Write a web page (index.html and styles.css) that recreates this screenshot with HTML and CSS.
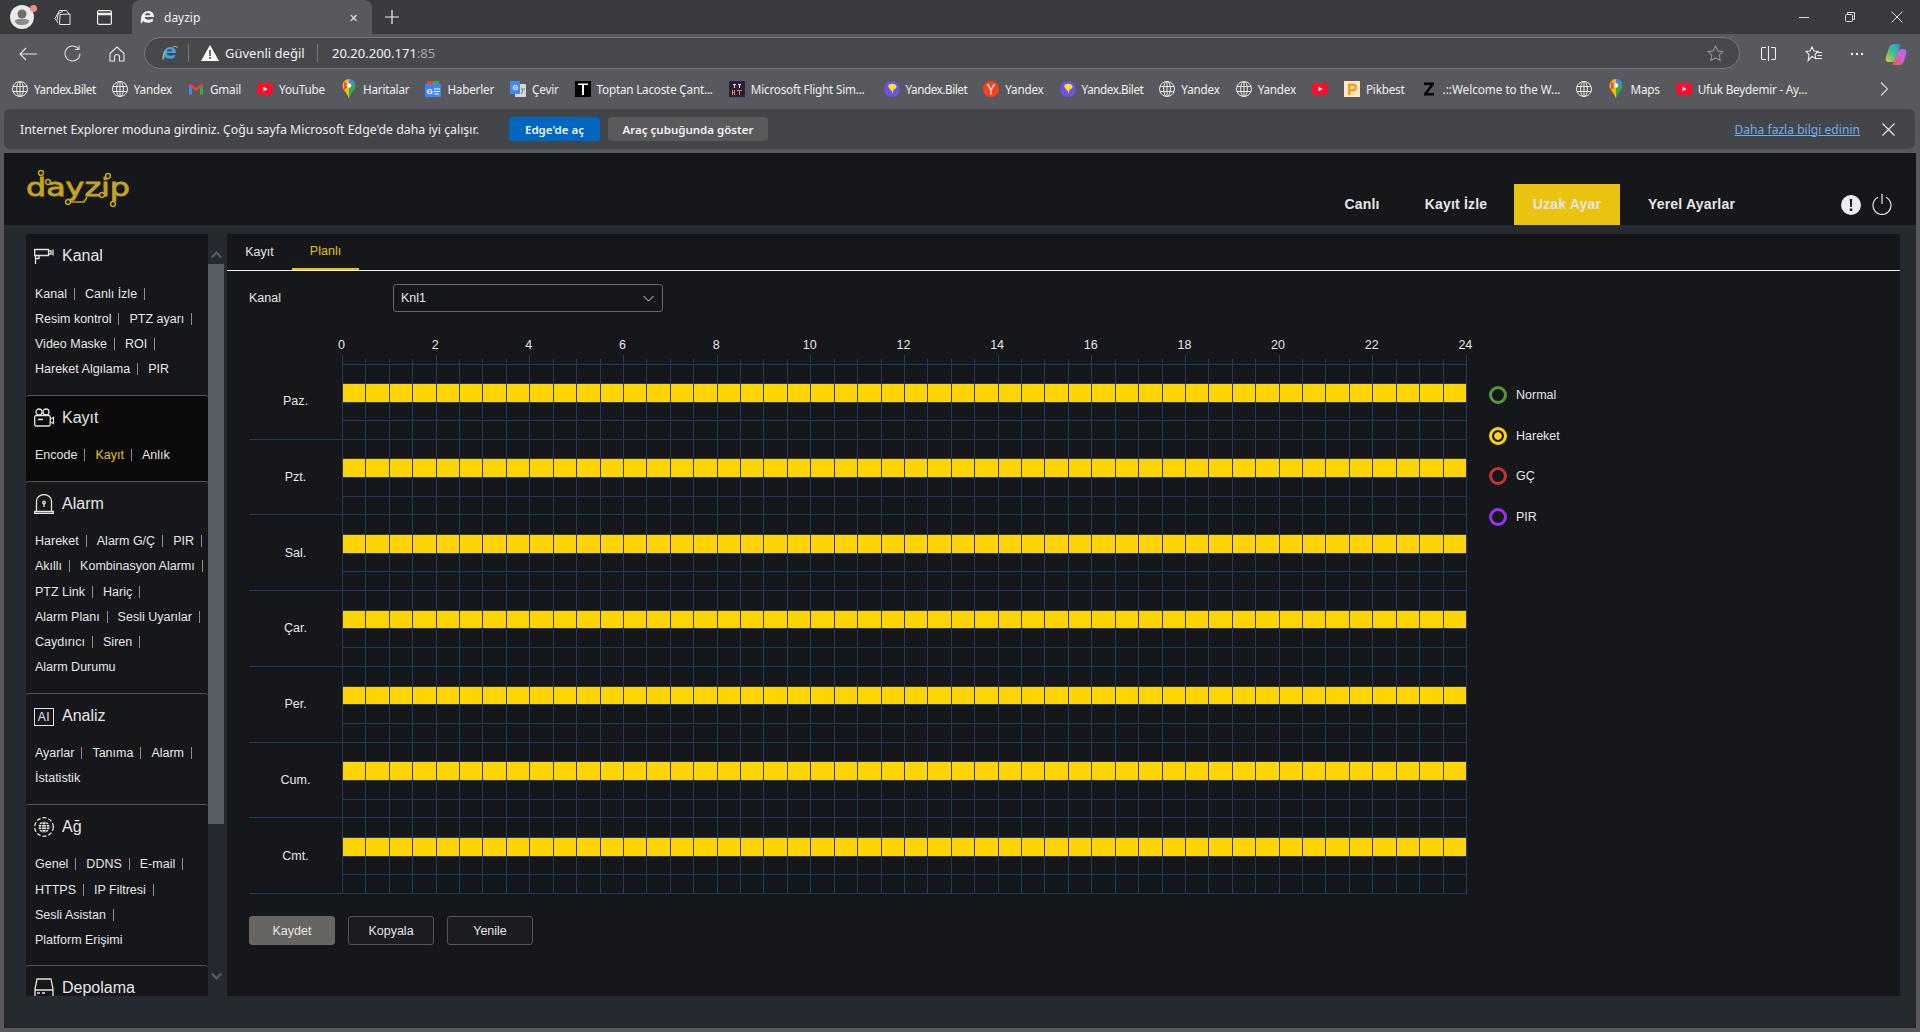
FILE: index.html
```html
<!DOCTYPE html>
<html lang="tr">
  <head>
    <meta charset="UTF-8" />
    <title>dayzip</title>
    <link rel="stylesheet" href="styles.css">
  </head>
  <body>
    <svg class="defs" width="0" height="0">
      <symbol id="globe" viewBox="0 0 16 16"><g fill="none" stroke="#e8e8e8" stroke-width="1"><circle cx="8" cy="8" r="7.5"/><ellipse cx="8" cy="8" rx="3.4" ry="7.5"/><path d="M8 .5v15M1 5.5h14M1 10.5h14"/></g></symbol>
      <symbol id="yt" viewBox="0 0 16 16"><rect x="0" y="2" width="16" height="12" rx="3" fill="#f70f2c"/><path d="M6.5 5.8v4.4L10.5 8z" fill="#fff"/></symbol>
      <symbol id="bilet" viewBox="0 0 16 16"><circle cx="8" cy="8" r="8" fill="#6a55e0"/><path d="M5 3.5c2-1.5 7-1 7.500 1.500s-2 3-3 4l-1 3.500L7 9C5 8 3.500 5 5 3.500z" fill="#ffdc2e"/></symbol>
      <symbol id="mappin" viewBox="0 0 16 20"><path d="M8 0a6.500 6.500 0 0 1 6.500 6.500c0 4-3.500 6-6.500 13z" fill="#34a853"/><path d="M8 0a6.500 6.500 0 0 0-6.500 6.500c0 4 3.500 6 6.500 13z" fill="#fbbc04"/><path d="M3 2.500 8 6.500 3 11z" fill="#ea4335" opacity=".9"/><path d="M8 0a6.500 6.500 0 0 1 6 4L8 6.500z" fill="#4285f4"/><circle cx="8" cy="6.500" r="2.300" fill="#fff"/></symbol>
      <symbol id="gear-e" viewBox="0 0 16 16"><path d="M1 10.500C1 5 4.500 2 8.500 2c3.500 0 5.500 2.500 5.500 6H4.800c.2 3 4.500 3.500 8 1.500v3C9 14.500 4 14 3.200 11.500 2.700 13 2.200 14 1 14.500 .6 13 .7 12 1 10.500zM4.900 6.200h5.400C10.200 3.400 5.400 3.400 4.900 6.200z" fill="#f2f2f2"/></symbol>
    </svg>

    <div class="tabbar">
      <div class="avatar">
        <svg width="24" height="24" viewBox="0 0 24 24"><circle cx="12" cy="12" r="12" fill="#e9e9e9"/><circle cx="12" cy="9" r="4.500" fill="#6e6e6e"/><path d="M5 16c0-3 14-3 14 0 0 2.500-3 4-7 4s-7-1.500-7-4z" fill="#8a8a8a"/></svg>
        <span class="avatar-dot"></span>
      </div>
      <svg class="tb-workspaces" width="17" height="17" viewBox="0 0 17 17" fill="none" stroke="#e6e6e6"><path d="M5.500 15.500 6 5.500l10-.5v10.500zM4 14 1 9.500 5.500 1.500h7L15 5M3 11.500 4 5l5-3"/></svg>
      <svg class="tb-vtabs" width="15" height="15" viewBox="0 0 15 15" fill="none" stroke="#eee" stroke-width="1.200"><rect x=".6" y=".6" width="13.800" height="13.800" rx="1.500"/><path d="M.6 4h13.800" stroke-width="2.500"/></svg>
      <div class="tab">
        <svg width="16" height="16"><use href="#gear-e"/></svg>
        <span class="tab-title">dayzip</span>
        <span class="tab-close">✕</span>
      </div>
      <svg class="tb-new" width="14" height="14" viewBox="0 0 14 14" stroke="#eee" stroke-width="1.200"><path d="M7 0v14M0 7h14"/></svg>
      <div class="win-controls">
        <svg width="10" height="10" viewBox="0 0 10 10" stroke="#ddd"><path d="M0 5.500h10"/></svg>
        <svg width="10" height="10" viewBox="0 0 10 10" fill="none" stroke="#ddd"><rect x=".5" y="2.500" width="7" height="7" rx="1"/><path d="M2.500 2.500V.5h7v7h-2"/></svg>
        <svg width="12" height="12" viewBox="0 0 12 12" stroke="#ddd"><path d="M.5.500l11 11M11.500.500l-11 11"/></svg>
      </div>
    </div>

    <div class="toolbar">
      <svg class="nav-back" width="18" height="14" viewBox="0 0 18 14" fill="none" stroke="#e8e8e8" stroke-width="1.100"><path d="M18 7H1M7 1 1 7l6 6"/></svg>
      <svg class="nav-reload" width="17" height="17" viewBox="0 0 17 17" fill="none" stroke="#d8d8d8" stroke-width="1.100"><path d="M14.500 4A7.500 7.500 0 1 0 16 8.500M15 .5V4.500H11"/></svg>
      <svg class="nav-home" width="16" height="16" viewBox="0 0 16 16" fill="none" stroke="#e8e8e8" stroke-width="1.100"><path d="M1 7.500 8 1l7 6.500V15h-4.500v-4a2.500 2.500 0 0 0-5 0v4H1z"/></svg>
      <div class="addressbar">
        <svg class="ie-icon" width="16" height="16" viewBox="0 0 16 16"><path d="M1 10.500C1 5 4.500 2 8.500 2c3.500 0 5.500 2.500 5.500 6H4.800c.2 3 4.500 3.500 8 1.500v3C9 14.500 4 14 3.200 11.500 2.700 13 2.200 14 1 14.500 .6 13 .7 12 1 10.500zM4.900 6.200h5.400C10.200 3.400 5.400 3.400 4.900 6.200z" fill="#3ba5e8"/><path d="M1 14.500C.4 12 2 8 3.500 6" fill="none" stroke="#eeb422"/><path d="M11 2c2-1 4-1 4 1" fill="none" stroke="#eeb422"/></svg>
        <span class="addr-sep"></span>
        <svg class="warn-icon" width="18" height="16" viewBox="0 0 18 16"><path d="M9 0 18 16H0z" fill="#fff"/><path d="M8.200 5h1.600v6H8.200zM8.200 12h1.600v2H8.200z" fill="#47484c"/></svg>
        <span class="addr-warn">Güvenli değil</span>
        <span class="addr-sep addr-sep-2"></span>
        <span class="addr-url">20.20.200.171<i>:85</i></span>
        <svg class="addr-star" width="17" height="17" viewBox="0 0 17 17" fill="none" stroke="#8e8f92" stroke-width="1.100"><path d="M8.500 1l2.300 4.900 5.200.7-3.800 3.600 1 5.300-4.700-2.600-4.700 2.600 1-5.300L1 6.600l5.200-.7z"/></svg>
      </div>
      <svg class="tool-split" width="15" height="15" viewBox="0 0 15 15" fill="none" stroke="#eee" stroke-width="1.100"><path d="M7.500 0v15M5 1.500H1.500a1 1 0 0 0-1 1v10a1 1 0 0 0 1 1H5M10 1.500h3.500a1 1 0 0 1 1 1v10a1 1 0 0 1-1 1H10"/></svg>
      <svg class="tool-fav" width="18" height="16" viewBox="0 0 18 16" fill="none" stroke="#eee" stroke-width="1.100"><path d="M7 1l1.900 4 4.100.5-3 2.900.8 4.300L7 10.500 3.200 14.500 4 8.400 1 5.500 5.100 5zM12 6.500h5M12.500 9.500h4.500M11.500 12.500h5.500"/></svg>
      <svg class="tool-more" width="14" height="4" viewBox="0 0 14 4" fill="#eee"><circle cx="2" cy="2" r="1.200"/><circle cx="7" cy="2" r="1.200"/><circle cx="12" cy="2" r="1.200"/></svg>
      <svg class="tool-copilot" width="22" height="22" viewBox="0 0 22 22">
        <defs>
          <linearGradient id="cpa" x1="0" y1="1" x2="1" y2="0"><stop offset="0" stop-color="#f0c428"/><stop offset=".5" stop-color="#3cc48c"/><stop offset="1" stop-color="#2a8cf0"/></linearGradient>
          <linearGradient id="cpb" x1="0" y1="1" x2="1" y2="0"><stop offset="0" stop-color="#f05a4a"/><stop offset=".6" stop-color="#d460d8"/><stop offset="1" stop-color="#9a70f0"/></linearGradient>
        </defs>
        <path d="M9 1h5c1 0 1.500 1 1 2L10 17c-.5 1.500-1.500 2-3 2H4c-3 0-4-2-3-5l3-9C5 2 6.500 1 9 1z" fill="url(#cpa)"/>
        <path d="M18 6c3 0 4 2 3 5l-2 7c-1 3-2.500 4-5 4H9c-1.500 0-1.500-1-1-2l5-11c.5-2 2-3 5-3z" fill="url(#cpb)"/>
      </svg>
    </div>

    <div class="bookmarks">
      <a class="bm bm-tight"><svg width="16" height="16"><use href="#globe"/></svg>Yandex.Bilet</a>
      <a class="bm"><svg width="16" height="16"><use href="#globe"/></svg>Yandex</a>
      <a class="bm"><svg width="16" height="16" viewBox="0 0 16 16"><path d="M1 3v10.500h3V7l4 3 4-3v6.500h3V3l-1.500-.5L8 7 2.500 2.500z" fill="#ea4335"/><path d="M1 4v9.500h3V7z" fill="#4285f4"/><path d="M12 7v6.500h3V4z" fill="#34a853"/></svg>Gmail</a>
      <a class="bm"><svg width="16" height="16"><use href="#yt"/></svg>YouTube</a>
      <a class="bm"><svg width="16" height="20"><use href="#mappin"/></svg>Haritalar</a>
      <a class="bm"><svg width="16" height="16" viewBox="0 0 16 16"><path d="M2 0h12v5H2z" fill="#34a853"/><path d="M2 0h6v4H2z" fill="#ea4335"/><rect y="3" width="16" height="13" rx="1" fill="#4285f4"/><text x="1.500" y="13" font-size="8" font-weight="bold" fill="#fff" font-family="Liberation Sans">G</text><path d="M9 8h6M9 10.500h6M9 13h5" stroke="#fff"/></svg>Haberler</a>
      <a class="bm"><svg width="16" height="16" viewBox="0 0 16 16"><rect x="5" y="3" width="11" height="13" rx="1" fill="#d8d8d8"/><rect width="10" height="13" rx="1" fill="#4285f4"/><text x="2.500" y="9" font-size="7" font-weight="bold" fill="#fff" font-family="Liberation Sans">G</text><path d="M11 8h4M13 8l-1.500 5" stroke="#777"/></svg>Çevir</a>
      <a class="bm"><svg width="16" height="16" viewBox="0 0 16 16"><rect width="16" height="16"/><path d="M3 2.500h10v1.500H9v10H7V4H3z" fill="#fff"/></svg>Toptan Lacoste Çant...</a>
      <a class="bm"><svg width="16" height="16" viewBox="0 0 16 16"><rect width="16" height="16" fill="#2c1c3e"/><path d="M4 3h3v1H6v3H5V4H4zM9 3h3v1h-1v3h-1V4H9z" fill="#e8e8e8"/><path d="M3 9h1v2h1V9h1v5H5v-2H4v2H3zM8 9h5v1h-2v4h-1v-4H8z" fill="#f08040"/></svg>Microsoft Flight Sim...</a>
      <a class="bm bm-tight bm-gap"><svg width="16" height="16"><use href="#bilet"/></svg>Yandex.Bilet</a>
      <a class="bm"><svg width="16" height="16" viewBox="0 0 16 16"><circle cx="8" cy="8" r="8" fill="#fc3f1d"/><path d="M4.500 3 8 9v4.500M11.500 3 8 9" fill="none" stroke="#fff" stroke-width="1.300"/></svg>Yandex</a>
      <a class="bm bm-tight"><svg width="16" height="16"><use href="#bilet"/></svg>Yandex.Bilet</a>
      <a class="bm"><svg width="16" height="16"><use href="#globe"/></svg>Yandex</a>
      <a class="bm"><svg width="16" height="16"><use href="#globe"/></svg>Yandex</a>
      <a class="bm"><svg width="16" height="16"><use href="#yt"/></svg></a>
      <a class="bm"><svg width="16" height="16" viewBox="0 0 16 16"><rect width="16" height="16" fill="#fde9c4"/><path d="M4 2.500h5a4 4 0 0 1 0 8H6.500v3.500H4zM6.500 5v3H9a1.500 1.500 0 0 0 0-3z" fill="#f79a1e"/></svg>Pikbest</a>
      <a class="bm bm-loose"><svg width="16" height="16" viewBox="0 0 16 16"><path d="M3 1.500h10v2L6.500 12H13v2.500H3v-2L9.500 4H3z" fill="#000"/></svg>.::Welcome to the W...</a>
      <a class="bm"><svg width="16" height="16"><use href="#globe"/></svg></a>
      <a class="bm"><svg width="16" height="20"><use href="#mappin"/></svg>Maps</a>
      <a class="bm"><svg width="16" height="16"><use href="#yt"/></svg>Ufuk Beydemir - Ay...</a>
      <svg class="bm-more" width="8" height="14" viewBox="0 0 8 14" fill="none" stroke="#ddd" stroke-width="1.100"><path d="M1 .5 7.500 7 1 13.500"/></svg>
    </div>

    <div class="infobar">
      <span class="info-text">Internet Explorer moduna girdiniz. Çoğu sayfa Microsoft Edge'de daha iyi çalışır.</span>
      <button class="info-btn info-btn-blue">Edge'de aç</button>
      <button class="info-btn">Araç çubuğunda göster</button>
      <a class="info-link">Daha fazla bilgi edinin</a>
      <svg class="info-close" width="13" height="13" viewBox="0 0 13 13" stroke="#eee" stroke-width="1.100"><path d="M.5.500l12 12M12.500.500l-12 12"/></svg>
    </div>

    <div class="page">
      <header class="header">
        <svg class="logo" width="110" height="42" viewBox="0 0 110 42" fill="none">
          <text x="2" y="28" class="logo-text" textLength="104" lengthAdjust="spacingAndGlyphs">dayzip</text>
          <g stroke="#c4a51e" stroke-width="1.500">
            <circle cx="17" cy="5" r="2.400" fill="#15171b"/>
            <circle cx="24" cy="14" r="2.400" fill="#15171b"/>
            <path d="M46.500 34H60l3-5"/>
            <circle cx="44" cy="34" r="2.400" fill="#15171b"/>
            <circle cx="84" cy="8" r="2.400" fill="#15171b"/>
            <circle cx="78" cy="27" r="2.400" fill="#15171b"/>
            <circle cx="89" cy="36" r="2.400" fill="#15171b"/>
          </g>
        </svg>
        <nav class="main-nav">
          <a>Canlı</a>
          <a>Kayıt İzle</a>
          <a class="active">Uzak Ayar</a>
          <a>Yerel Ayarlar</a>
        </nav>
        <div class="header-icons">
          <svg width="20" height="20" viewBox="0 0 20 20"><circle cx="10" cy="10" r="10" fill="#eceef2"/><path d="M8.800 4h2.400l-.4 8H9.200zM8.800 13.500h2.400V16H8.800z" fill="#15171b"/></svg>
          <svg width="20" height="21" viewBox="0 0 20 21" fill="none" stroke="#e4e4e4" stroke-width="1.200"><path d="M10 0v10M6 3.300a9 9 0 1 0 8 0"/></svg>
        </div>
      </header>

      <div class="content">
        <aside class="sidebar">
          <div class="menu">
            <section class="menu-sec">
              <h3><svg width="20" height="20" viewBox="0 0 20 20" fill="none" stroke="#e4e4e4" stroke-width="1.300"><path d="M.7 3.500h13.800v6H.7zM14.500 5h2.500v3h-2.500M19 3.500v6M5 9.500v3H1.500M1.500 10v8M1 18h0"/></svg>Kanal</h3>
              <div class="links"><a>Kanal</a><a>Canlı İzle</a><a>Resim kontrol</a><a>PTZ ayarı</a><a>Video Maske</a><a>ROI</a><a>Hareket Algılama</a><a class="last">PIR</a></div>
            </section>
            <section class="menu-sec current">
              <h3><svg width="20" height="20" viewBox="0 0 20 20" fill="none" stroke="#e4e4e4" stroke-width="1.300"><circle cx="5" cy="4" r="3"/><circle cx="12" cy="4" r="3"/><rect x=".7" y="7.500" width="15.500" height="10.500" rx="1.500"/><path d="M16.500 11l3-1.500v6l-3-1.500M4 11.500h5" /></svg>Kayıt</h3>
              <div class="links"><a>Encode</a><a class="on">Kayıt</a><a class="last">Anlık</a></div>
            </section>
            <section class="menu-sec">
              <h3><svg width="20" height="20" viewBox="0 0 20 20" fill="none" stroke="#e4e4e4" stroke-width="1.300"><path d="M2.500 17V7a7 6 0 0 1 15 0v10M.7 17.500h18.600v2H.7z"/><circle cx="10" cy="8.500" r="1.300"/><path d="M10 10v3"/></svg>Alarm</h3>
              <div class="links"><a>Hareket</a><a>Alarm G/Ç</a><a>PIR</a><a>Akıllı</a><a>Kombinasyon Alarmı</a><a>PTZ Link</a><a>Hariç</a><a>Alarm Planı</a><a>Sesli Uyarılar</a><a>Caydırıcı</a><a>Siren</a><a class="last">Alarm Durumu</a></div>
            </section>
            <section class="menu-sec">
              <h3><span class="ai-icon">AI</span>Analiz</h3>
              <div class="links"><a>Ayarlar</a><a>Tanıma</a><a>Alarm</a><a class="last">İstatistik</a></div>
            </section>
            <section class="menu-sec">
              <h3><svg width="20" height="20" viewBox="0 0 20 20" fill="none" stroke="#e4e4e4"><circle cx="10" cy="10" r="9.300" stroke-dasharray="4 2" stroke-width="1.300"/><circle cx="10" cy="10" r="5.500" fill="#e4e4e4" stroke="none"/><g stroke="#15171b" stroke-width=".8"><ellipse cx="10" cy="10" rx="2.500" ry="5.500"/><path d="M4.500 10h11M5 7.500h10M5 12.500h10"/></g></svg>Ağ</h3>
              <div class="links"><a>Genel</a><a>DDNS</a><a>E-mail</a><a>HTTPS</a><a>IP Filtresi</a><a>Sesli Asistan</a><a class="last full">Platform Erişimi</a></div>
            </section>
            <section class="menu-sec">
              <h3><svg width="20" height="20" viewBox="0 0 20 20" fill="none" stroke="#e4e4e4" stroke-width="1.300"><path d="M3 1h14l2 10v8H1v-8zM1 12h18M3 15h3M8 15h3"/></svg>Depolama</h3>
            </section>
          </div>
          <div class="scrollbar">
            <svg class="scroll-arrow" width="11" height="7" viewBox="0 0 11 7" fill="none" stroke="#565e66" stroke-width="2"><path d="M.7 6 5.500 1l4.800 5"/></svg>
            <div class="scroll-thumb"></div>
            <svg class="scroll-arrow scroll-down" width="11" height="7" viewBox="0 0 11 7" fill="none" stroke="#565e66" stroke-width="2"><path d="M.7 1l4.800 5 4.800-5"/></svg>
          </div>
        </aside>

        <main class="panel">
          <div class="tabs">
            <a>Kayıt</a>
            <a class="active">Planlı</a>
          </div>
          <div class="form-row">
            <label>Kanal</label>
            <div class="select">Knl1
              <svg width="11" height="7" viewBox="0 0 11 7" fill="none" stroke="#d8d8d8"><path d="M.5 1l5 5 5-5"/></svg>
            </div>
          </div>
          <div class="schedule-row">
            <div id="schedule" class="schedule"></div>
            <div class="legend">
              <div class="legend-item"><span class="dot green"></span>Normal</div>
              <div class="legend-item"><span class="dot yellow"></span>Hareket</div>
              <div class="legend-item"><span class="dot red"></span>GÇ</div>
              <div class="legend-item"><span class="dot purple"></span>PIR</div>
            </div>
          </div>
          <div class="buttons">
            <button class="btn btn-primary">Kaydet</button>
            <button class="btn">Kopyala</button>
            <button class="btn">Yenile</button>
          </div>
        </main>
      </div>
    </div>
    <script src="script.js"></script>
  </body>
</html>
```

FILE: styles.css
```css
* {
  box-sizing: border-box;
  margin: 0;
  padding: 0;
}
body {
  width: 1920px;
  height: 1032px;
  overflow: hidden;
  background-color: #58595e;
  font-family: 'Noto Sans', sans-serif;
  font-size: 12px;
  color: #f0f0f0;
  display: flex;
  flex-direction: column;
}
.defs {
  position: absolute;
}
svg {
  flex-shrink: 0;
  display: block;
}

/* browser chrome */
.tabbar {
  height: 34px;
  background-color: #3a3b3f;
  display: flex;
  align-items: center;
  flex-shrink: 0;
}
.avatar {
  position: relative;
  margin-left: 10px;
}
.avatar-dot {
  position: absolute;
  top: 0;
  right: -3px;
  width: 7px;
  height: 7px;
  border-radius: 50%;
  background-color: #f08a88;
}
.tb-workspaces {
  margin-left: 20px;
}
.tb-vtabs {
  margin-left: 26px;
}
.tab {
  margin-left: 20px;
  width: 240px;
  height: 34px;
  background-color: #58595e;
  border-radius: 8px 8px 0 0;
  display: flex;
  align-items: center;
  padding-left: 8px;
}
.tab-title {
  margin-left: 8px;
  font-size: 12px;
  flex: 1;
}
.tab-close {
  font-size: 11px;
  margin-right: 14px;
  color: #e6e6e6;
}
.tb-new {
  margin-left: 13px;
}
.win-controls {
  margin-left: auto;
  display: flex;
  align-items: center;
  gap: 36px;
  padding-right: 17px;
}
.toolbar {
  height: 35px;
  flex-shrink: 0;
  display: flex;
  align-items: flex-end;
  position: relative;
}
.toolbar > svg {
  align-self: center;
  margin-top: 4px;
}
.nav-back {
  margin-left: 19px;
}
.nav-reload {
  margin-left: 27px;
}
.nav-home {
  margin-left: 28px;
}
.addressbar {
  margin-left: 19px;
  width: 1596px;
  height: 32px;
  background-color: #47484c;
  border: 1px solid #77787b;
  border-radius: 16px;
  display: flex;
  align-items: center;
  font-size: 13px;
}
.ie-icon {
  margin-left: 17px;
}
.addr-sep {
  width: 1px;
  height: 18px;
  background-color: #77787b;
  margin-left: 10px;
}
.warn-icon {
  margin-left: 12px;
}
.addr-warn {
  margin-left: 6px;
  width: 80px;
  white-space: nowrap;
}
.addr-sep-2 {
  margin-left: 12px;
}
.addr-url {
  margin-left: 14px;
  color: #f4f4f4;
}
.addr-url i {
  font-style: normal;
  color: #a8a8ac;
}
.addr-star {
  margin-left: auto;
  margin-right: 15px;
}
.tool-split {
  margin-left: 21px;
}
.tool-fav {
  margin-left: 29px;
}
.tool-more {
  margin-left: 27px;
}
.tool-copilot {
  margin-left: 21px;
}
.bookmarks {
  height: 40px;
  flex-shrink: 0;
  display: flex;
  align-items: center;
  gap: 16px;
  padding-left: 12px;
  position: relative;
}
.bm {
  display: flex;
  align-items: center;
  gap: 6px;
  white-space: nowrap;
  font-size: 11.7px;
  letter-spacing: -0.2px;
}
.bm-tight {
  letter-spacing: -0.45px;
}
.bm-loose {
  letter-spacing: 0;
}
.bm-gap {
  margin-left: 3px;
}
.bm-more {
  position: absolute;
  right: 32px;
  top: 13px;
}
.infobar {
  height: 40px;
  flex-shrink: 0;
  margin: 0 5px 4px 4px;
  background-color: #444548;
  border-radius: 6px;
  display: flex;
  align-items: center;
  padding-left: 16px;
}
.info-text {
  width: 489px;
  white-space: nowrap;
  font-size: 12.3px;
}
.info-btn {
  height: 24px;
  width: 160px;
  margin-left: 8px;
  border: none;
  border-radius: 3px;
  background-color: #5a5a5c;
  color: #f4f4f4;
  font-family: 'Noto Sans', sans-serif;
  font-size: 11.5px;
  font-weight: 600;
}
.info-btn-blue {
  width: 91px;
  margin-left: 0;
  background-color: #0067c0;
}
.info-link {
  margin-left: auto;
  color: #6cb0ee;
  text-decoration: underline;
  font-size: 12.1px;
}
.info-close {
  margin: 0 20px 0 22px;
}

/* device web ui */
.page {
  flex: 1;
  margin: 0 4px 4px;
  background-color: #242a30;
  font-family: 'Liberation Sans', Arial, sans-serif;
  color: #e6e6e6;
  display: flex;
  flex-direction: column;
  min-height: 0;
}
.header {
  height: 72px;
  flex-shrink: 0;
  background-color: #15171b;
  display: flex;
  align-items: flex-end;
  position: relative;
}
.logo {
  align-self: flex-start;
  margin: 15px 0 0 20px;
}
.logo-text {
  font-family: 'DejaVu Sans', sans-serif;
  font-size: 25.500px;
  fill: #c4a51e;
  stroke: #c4a51e;
  stroke-width: 0.8px;
}
.main-nav {
  margin-left: 1192px;
  display: flex;
  height: 41px;
}
.main-nav a {
  display: flex;
  align-items: center;
  justify-content: center;
  width: 106px;
  padding-bottom: 2px;
  font-size: 14px;
  font-weight: bold;
  letter-spacing: 0.2px;
}
.main-nav a.active {
  background-color: #e9c30f;
}
.main-nav a:nth-child(1) {
  width: 72px;
}
.main-nav a:nth-child(2) {
  width: 116px;
}
.main-nav a:nth-child(4) {
  width: 143px;
}
.header-icons {
  display: flex;
  align-items: center;
  gap: 11px;
  margin: 0 0 10px 78px;
}
.content {
  flex: 1;
  display: flex;
  padding: 9px 16px 32px 22px;
  min-height: 0;
}
.sidebar {
  width: 198px;
  flex-shrink: 0;
  display: flex;
  overflow: hidden;
}
.menu {
  width: 182px;
  background-color: #15171b;
  overflow: hidden;
}
.menu-sec {
  padding: 0 0 13px 9px;
  border-top: 1px solid #555;
  border-radius: 3px;
}
.menu-sec:first-child {
  border-top: none;
}
.menu-sec.current {
  background-color: #0a0a0a;
}
.menu-sec h3 {
  height: 44px;
  margin: 0 0 3px -1px;
  display: flex;
  align-items: center;
  gap: 8px;
  font-size: 16px;
  font-weight: normal;
  color: #e6e6e6;
}
.ai-icon {
  width: 20px;
  height: 18px;
  border: 1.500px solid #e4e4e4;
  font-size: 12px;
  display: flex;
  align-items: center;
  justify-content: center;
  letter-spacing: 0.5px;
  margin-top: 3px;
}
.links {
  display: flex;
  flex-wrap: wrap;
  width: 182px;
}
.links a {
  display: flex;
  align-items: center;
  height: 25.150px;
  font-size: 12.5px;
  white-space: nowrap;
  color: #e6e6e6;
}
.links a::after {
  content: '';
  width: 1px;
  height: 12px;
  margin: 0 10px 0 7px;
  background-color: #8f8f8f;
}
.links a.last::after {
  display: none;
}
.links a.full {
  flex-basis: 100%;
}
.links a.on {
  color: #e9c30f;
}
.scrollbar {
  width: 16px;
  display: flex;
  flex-direction: column;
  align-items: center;
}
.scroll-arrow {
  margin: 14px 0 2px;
  height: 14px;
}
.scroll-thumb {
  width: 16px;
  height: 560px;
  background-color: #565e66;
}
.scroll-down {
  margin-top: 145px;
}
.panel {
  margin-left: 3px;
  flex: 1;
  background-color: #15171b;
  min-width: 0;
}
.tabs {
  height: 37px;
  display: flex;
  border-bottom: 1px solid #eee;
  font-size: 12.5px;
}
.tabs a {
  height: 36px;
  display: flex;
  align-items: center;
  justify-content: center;
}
.tabs a:first-child {
  width: 65px;
}
.tabs a.active {
  width: 67px;
  color: #e9c30f;
  border-bottom: 2px solid #e9c30f;
}
.form-row {
  margin: 13px 0 0 22px;
  display: flex;
  align-items: center;
  font-size: 12.5px;
}
.form-row label {
  width: 144px;
}
.select {
  width: 270px;
  height: 28px;
  border: 1px solid #666;
  border-radius: 3px;
  display: flex;
  align-items: center;
  justify-content: space-between;
  padding: 0 8px 0 7px;
}
.schedule-row {
  margin: 25px 0 0 22px;
  display: flex;
}
.schedule {
  width: 1218px;
  font-size: 12.5px;
}
.hours {
  margin: 0 0 2px 92px;
  width: 1125px;
  height: 16px;
  display: flex;
  justify-content: space-between;
  align-items: center;
}
.hours span {
  width: 1px;
  display: flex;
  justify-content: center;
  white-space: nowrap;
}
.ticks {
  margin-left: 93px;
  width: 1125px;
  height: 9px;
  display: grid;
  grid-template-columns: repeat(48, 1fr) 1px;
  align-items: end;
}
.ticks i {
  height: 5px;
  border-left: 1px solid #1c3d60;
}
.ticks i.major {
  height: 9px;
}
.days {
  height: 530px;
  display: grid;
  grid-template-rows: repeat(7, 1fr);
}
.day {
  display: flex;
  border-bottom: 1px solid #1c3d60;
  min-height: 0;
}
.day-label {
  width: 93px;
  display: flex;
  align-items: center;
  justify-content: center;
}
.day-grid {
  width: 1125px;
  display: grid;
  grid-template-columns: repeat(48, 1fr);
  grid-template-rows: repeat(4, 1fr);
  border-right: 1px solid #1c3d60;
}
.day:first-child .day-grid {
  border-top: 1px solid #1c3d60;
}
.day-grid i {
  border-left: 1px solid #1c3d60;
  border-top: 1px solid #1c3d60;
}
.day-grid i:nth-child(-n + 48) {
  border-top: none;
}
.day-grid i.rec {
  background-color: #ffd400;
}
.legend {
  margin-left: 22px;
  padding-top: 49px;
  display: flex;
  flex-direction: column;
  gap: 22.700px;
  font-size: 12.5px;
}
.legend-item {
  display: flex;
  align-items: center;
  gap: 9px;
  height: 18px;
}
.dot {
  width: 18px;
  height: 18px;
  border-radius: 50%;
  border: 3px solid;
}
.dot.green {
  border-color: #4e9a33;
}
.dot.yellow {
  border-color: #ffd400;
  background: radial-gradient(circle, #ffd400 0 3.500px, #15171b 4px);
}
.dot.red {
  border-color: #c23331;
}
.dot.purple {
  border-color: #9b30ee;
}
.buttons {
  margin: 22px 0 0 22px;
  display: flex;
  gap: 13px;
}
.btn {
  width: 86px;
  height: 29px;
  background-color: #1b1c1f;
  border: 1px solid #555;
  border-radius: 3px;
  color: #e6e6e6;
  font-family: 'Liberation Sans', Arial, sans-serif;
  font-size: 12.5px;
}
.btn-primary {
  background-color: #666562;
  border-color: #666562;
}
```

FILE: script.js
```js
const schedule = document.getElementById('schedule');
const days = ['Paz.', 'Pzt.', 'Sal.', 'Çar.', 'Per.', 'Cum.', 'Cmt.'];

let hours = '';
for (let h = 0; h <= 24; h += 2) {
  hours += `<span>${h}</span>`;
}

let ticks = '';
for (let t = 0; t <= 48; t++) {
  ticks += `<i class="${t % 4 === 0 ? 'major' : ''}"></i>`;
}

let rows = '';
days.forEach((day) => {
  let cells = '';
  for (let r = 0; r < 4; r++) {
    for (let c = 0; c < 48; c++) {
      cells += `<i class="${r === 1 ? 'rec' : ''}"></i>`;
    }
  }
  rows += `<div class="day"><div class="day-label">${day}</div><div class="day-grid">${cells}</div></div>`;
});

schedule.innerHTML = `<div class="hours">${hours}</div><div class="ticks">${ticks}</div><div class="days">${rows}</div>`;
```
